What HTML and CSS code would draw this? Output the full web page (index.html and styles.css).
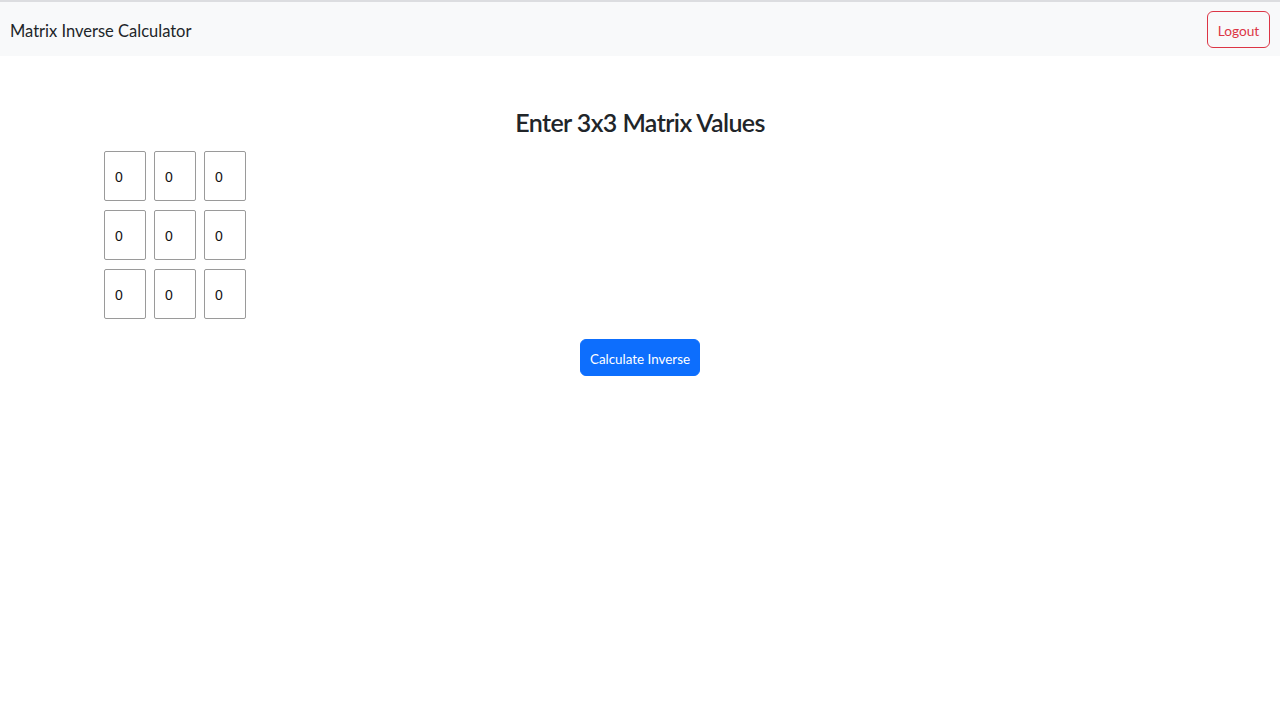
FILE: index.html
```html
<!DOCTYPE html>
<html lang="en">
<head>
<meta charset="utf-8">
<title>Matrix Inverse Calculator</title>
<link rel="stylesheet" href="styles.css">
</head>
<body>
<nav class="navbar">
  <span class="brand">Matrix Inverse Calculator</span>
  <button class="btn-logout">Logout</button>
</nav>
<main class="content">
  <h3 class="title">Enter 3x3 Matrix Values</h3>
  <div class="matrix">
    <input class="cell" value="0"><input class="cell" value="0"><input class="cell" value="0">
    <input class="cell" value="0"><input class="cell" value="0"><input class="cell" value="0">
    <input class="cell" value="0"><input class="cell" value="0"><input class="cell" value="0">
  </div>
  <div class="actions">
    <button class="btn-primary">Calculate Inverse</button>
  </div>
</main>
</body>
</html>
```
FILE: styles.css
```css
* { box-sizing: border-box; }
html, body { margin: 0; padding: 0; }
body {
  font-family: "Lato", "Open Sans", sans-serif;
  color: #212529;
  background: #fff;
  border-top: 2px solid #dcdde0;
}
.navbar {
  height: 54px;
  background: #f8f9fa;
  display: flex;
  align-items: center;
  justify-content: space-between;
  padding: 0 10px;
}
.brand {
  font-size: 16.5px;
  color: #212529;
  margin-top: 4px;
}
.btn-logout {
  font-family: inherit;
  font-size: 13.7px;
  color: #dc3545;
  background: transparent;
  border: 1px solid #dc3545;
  border-radius: 6px;
  height: 37px;
  width: 63px;
  padding: 2px 0 0;
  margin-top: 1px;
}
.content {
  padding: 0 104px;
}
.title {
  margin: 48px 0 11px;
  text-align: center;
  font-size: 25px;
  font-weight: 600;
  letter-spacing: -0.6px;
  line-height: 36px;
}
.matrix {
  display: grid;
  grid-template-columns: repeat(3, 42px);
  column-gap: 8px;
  row-gap: 9px;
}
.cell {
  width: 42px;
  height: 50px;
  border: 1px solid #9a9a9a;
  border-radius: 2px;
  padding: 2px 0 0 10px;
  font-family: "Liberation Sans", Arial, sans-serif;
  font-size: 14px;
  color: #111;
  background: #fff;
}
.actions {
  display: flex;
  justify-content: center;
  margin-top: 20px;
}
.btn-primary {
  font-family: inherit;
  font-size: 13.4px;
  color: #fff;
  background: #0d6efd;
  border: 1px solid #0d6efd;
  border-radius: 6px;
  height: 37px;
  width: 120px;
  padding: 2px 0 0;
}
```
